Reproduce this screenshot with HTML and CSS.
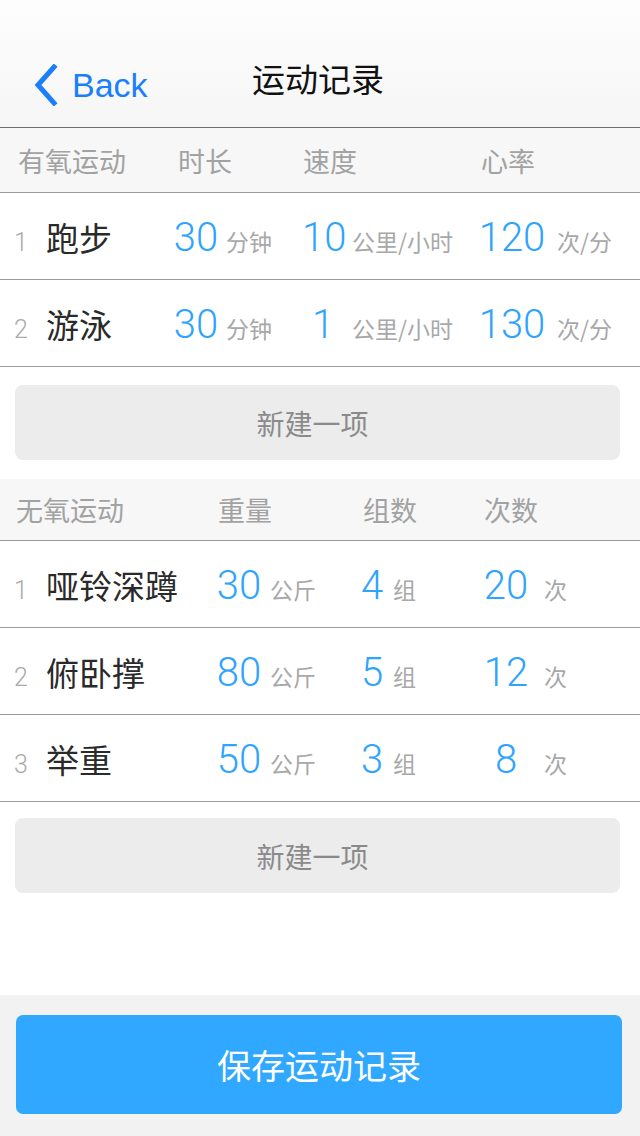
FILE: index.html
```html
<!DOCTYPE html>
<html lang="zh-CN">
<head>
<meta charset="utf-8">
<title>运动记录</title>
<link rel="stylesheet" href="styles.css">
</head>
<body>
<div class="page">
  <header class="nav">
    <a class="back" href="#">
      <svg class="chev" width="26" height="42" viewBox="0 0 26 42"><path d="M21 3 L5 21 L21 39" fill="none" stroke="#1a7ffb" stroke-width="5" stroke-linecap="square" stroke-linejoin="miter"/></svg>
      <span class="back-text">Back</span>
    </a>
    <h1 class="title">运动记录</h1>
    <div class="nav-spacer"></div>
  </header>

  <main class="main">
    <section class="table aero">
      <div class="thead">
        <span class="h h1">有氧运动</span>
        <span class="h h2">时长</span>
        <span class="h h3">速度</span>
        <span class="h h4">心率</span>
      </div>
      <div class="row">
        <span class="num">1</span>
        <span class="name">跑步</span>
        <span class="val v1">30</span>
        <span class="unit u1">分钟</span>
        <span class="val v2">10</span>
        <span class="unit u2">公里/小时</span>
        <span class="val v3">120</span>
        <span class="unit u3">次/分</span>
      </div>
      <div class="row">
        <span class="num">2</span>
        <span class="name">游泳</span>
        <span class="val v1">30</span>
        <span class="unit u1">分钟</span>
        <span class="val v2">1</span>
        <span class="unit u2">公里/小时</span>
        <span class="val v3">130</span>
        <span class="unit u3">次/分</span>
      </div>
    </section>
    <button class="add add-first">新建一项</button>

    <section class="table anaero">
      <div class="thead">
        <span class="h h1">无氧运动</span>
        <span class="h h2">重量</span>
        <span class="h h3">组数</span>
        <span class="h h4">次数</span>
      </div>
      <div class="row">
        <span class="num">1</span>
        <span class="name">哑铃深蹲</span>
        <span class="val v1">30</span>
        <span class="unit u1">公斤</span>
        <span class="val v2">4</span>
        <span class="unit u2">组</span>
        <span class="val v3">20</span>
        <span class="unit u3">次</span>
      </div>
      <div class="row">
        <span class="num">2</span>
        <span class="name">俯卧撑</span>
        <span class="val v1">80</span>
        <span class="unit u1">公斤</span>
        <span class="val v2">5</span>
        <span class="unit u2">组</span>
        <span class="val v3">12</span>
        <span class="unit u3">次</span>
      </div>
      <div class="row">
        <span class="num">3</span>
        <span class="name">举重</span>
        <span class="val v1">50</span>
        <span class="unit u1">公斤</span>
        <span class="val v2">3</span>
        <span class="unit u2">组</span>
        <span class="val v3">8</span>
        <span class="unit u3">次</span>
      </div>
    </section>
    <button class="add add-second">新建一项</button>
  </main>

  <footer class="footer">
    <button class="save">保存运动记录</button>
  </footer>
</div>
</body>
</html>
```

FILE: styles.css
```css
* { box-sizing: border-box; }
html, body { margin: 0; padding: 0; }
body {
  background: #ffffff;
  font-family: "Noto Sans CJK SC", "Liberation Sans", sans-serif;
}
.page {
  width: 640px;
  min-height: 1136px;
  display: flex;
  flex-direction: column;
}

/* nav */
.nav {
  height: 128px;
  padding-top: 40px;
  background: linear-gradient(#fdfdfd, #f6f6f6);
  border-bottom: 1px solid #6f6f6f;
  display: grid;
  grid-template-columns: 1fr auto 1fr;
  align-items: center;
}
.back {
  display: flex;
  align-items: center;
  gap: 13px;
  padding-left: 33px;
  text-decoration: none;
  color: #1a7ffb;
}
.chev { display: block; margin-top: 2px; }
.back-text {
  font-family: "Liberation Sans", sans-serif;
  font-size: 34px;
  line-height: 1;
  margin-top: 2px;
}
.title {
  margin: 0 0 10px -4px;
  font-weight: normal;
  font-size: 33px;
  line-height: 1;
  color: #111;
}

/* tables */
.thead {
  display: flex;
  align-items: center;
  background: #f7f7f7;
  border-bottom: 1px solid #9b9b9b;
  color: #a2a2a2;
  font-size: 27px;
  line-height: 1;
}
.aero .thead { height: 65px; padding-left: 18px; }
.anaero .thead { height: 62px; padding-left: 16px; }
.aero .h1 { width: 160px; }
.aero .h2 { width: 125px; }
.aero .h3 { width: 178px; }
.anaero .h1 { width: 202px; }
.anaero .h2 { width: 145px; }
.anaero .h3 { width: 121px; }

.row {
  height: 87px;
  display: flex;
  align-items: baseline;
  padding-top: 25px;
  border-bottom: 1px solid #9b9b9b;
  white-space: nowrap;
}
.num {
  width: 46px;
  padding-left: 14px;
  font-family: Roboto, "Liberation Sans", sans-serif;
  font-weight: 300;
  font-size: 25px;
  line-height: 1;
  color: #aaaaaa;
}
.name {
  font-size: 33px;
  line-height: 1;
  color: #2a2a2a;
}
.val {
  font-family: Roboto, "Liberation Sans", sans-serif;
  font-weight: 350;
  font-size: 40px;
  line-height: 1;
  color: #2ea4ff;
  text-align: center;
}
.unit {
  font-size: 23px;
  line-height: 1;
  color: #a8a8a8;
}

.aero .name { width: 120px; }
.aero .v1 { width: 60px; }
.aero .u1 { width: 76px; }
.aero .v2 { width: 42px; }
.aero .u2 { width: 130px; padding-left: 8px; }
.aero .v3 { width: 76px; }
.aero .u3 { padding-left: 7px; }

.anaero .name { width: 164px; }
.anaero .v1 { width: 58px; }
.anaero .u1 { width: 84px; padding-left: 2px; }
.anaero .v2 { width: 40px; }
.anaero .u2 { width: 84px; padding-left: 1px; }
.anaero .v3 { width: 60px; }
.anaero .u3 { padding-left: 8px; }

/* add buttons */
.add {
  display: block;
  width: 605px;
  height: 75px;
  margin-left: 15px;
  border: none;
  border-radius: 8px;
  background: #ececec;
  color: #8a8a8a;
  font-family: "Noto Sans CJK SC", sans-serif;
  font-size: 28px;
  line-height: 1;
  padding: 0 10px 0 0;
}
.add-first { margin-top: 18px; margin-bottom: 19px; }
.add-second { margin-top: 16px; }

.main { flex: 1; }

/* footer */
.footer {
  height: 141px;
  background: #f2f2f2;
  padding: 20px 18px 22px 16px;
}
.save {
  display: block;
  width: 100%;
  height: 99px;
  border: none;
  border-radius: 7px;
  background: #30a8ff;
  color: #ffffff;
  font-family: "Noto Sans CJK SC", sans-serif;
  font-size: 34px;
  line-height: 1;
  padding: 0;
}
```
